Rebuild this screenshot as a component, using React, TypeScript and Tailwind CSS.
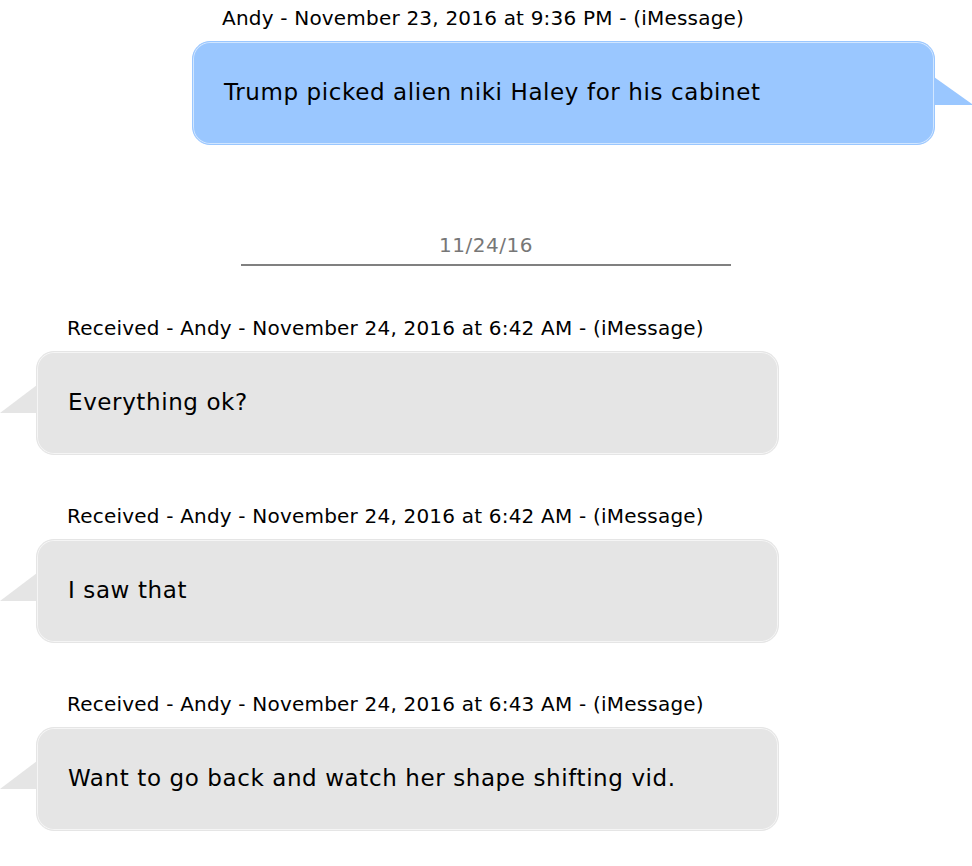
import React from "react";

const font = { fontFamily: '"DejaVu Sans", Verdana, sans-serif' };

function Sent({ header, text }: { header: string; text: string }) {
  return (
    <div className="flex flex-col">
      <div className="ml-[222px] text-[20px] leading-[24px] tracking-[0.2px] text-black">{header}</div>
      <div className="mt-[11px] flex items-start">
        <div className="ml-[192px] flex h-[104px] w-[743px] items-center rounded-[18px] border border-[#9ac7ff] bg-[#9ac7ff] px-[31px] pb-[2px] text-[23px] tracking-[0.6px] text-black shadow-[inset_0_0_0_1px_rgba(255,255,255,0.55)]">
          {text}
        </div>
        <svg className="-ml-px mt-[36px] shrink-0" width="38" height="28" viewBox="0 0 38 28">
          <polygon points="0,0 38,27 38,28 0,28" fill="#9ac7ff" />
        </svg>
      </div>
    </div>
  );
}

function Received({ header, text }: { header: string; text: string }) {
  return (
    <div className="flex flex-col">
      <div className="ml-[67px] text-[20px] leading-[24px] tracking-[0.2px] text-black">{header}</div>
      <div className="mt-[11px] flex items-start">
        <svg className="mt-[34px] shrink-0" width="37" height="28" viewBox="0 0 37 28">
          <polygon points="37,0 0,28 37,28" fill="#e5e5e5" />
        </svg>
        <div className="-ml-px flex h-[104px] w-[743px] items-center rounded-[18px] border border-[#e5e5e5] bg-[#e5e5e5] px-[31px] pb-[2px] text-[23px] tracking-[0.6px] text-black shadow-[inset_0_0_0_1px_rgba(255,255,255,0.6)]">
          {text}
        </div>
      </div>
    </div>
  );
}

export default function App() {
  return (
    <div className="min-h-[866px] w-[972px] overflow-hidden bg-white pt-[6px]" style={font}>
      <Sent
        header="Andy - November 23, 2016 at 9:36 PM - (iMessage)"
        text="Trump picked alien niki Haley for his cabinet"
      />
      <div className="mt-[88px] flex flex-col items-center">
        <div className="text-[20px] leading-[24px] tracking-[0.5px] text-[#777777]">11/24/16</div>
        <div className="mt-[7px] h-[2px] w-[490px] bg-[#808080]" />
      </div>
      <div className="mt-[50px] flex flex-col gap-[49px]">
        <Received
          header="Received - Andy - November 24, 2016 at 6:42 AM - (iMessage)"
          text="Everything ok?"
        />
        <Received
          header="Received - Andy - November 24, 2016 at 6:42 AM - (iMessage)"
          text="I saw that"
        />
        <Received
          header="Received - Andy - November 24, 2016 at 6:43 AM - (iMessage)"
          text="Want to go back and watch her shape shifting vid."
        />
      </div>
    </div>
  );
}
